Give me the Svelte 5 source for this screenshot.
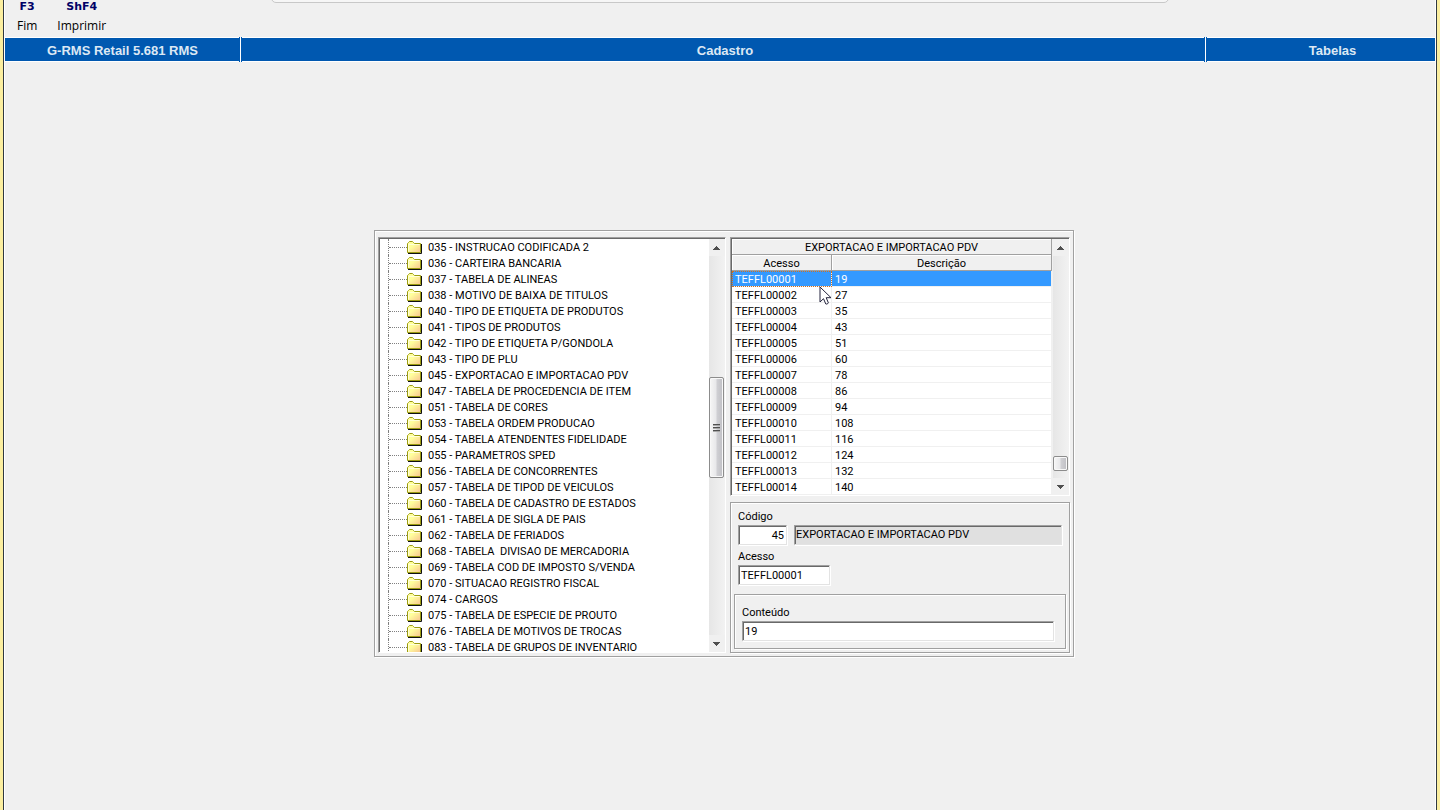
<script>
  const folders = [
    '035 - INSTRUCAO CODIFICADA 2',
    '036 - CARTEIRA BANCARIA',
    '037 - TABELA DE ALINEAS',
    '038 - MOTIVO DE BAIXA DE TITULOS',
    '040 - TIPO DE ETIQUETA DE PRODUTOS',
    '041 - TIPOS DE PRODUTOS',
    '042 - TIPO DE ETIQUETA P/GONDOLA',
    '043 - TIPO DE PLU',
    '045 - EXPORTACAO E IMPORTACAO PDV',
    '047 - TABELA DE PROCEDENCIA DE ITEM',
    '051 - TABELA DE CORES',
    '053 - TABELA ORDEM PRODUCAO',
    '054 - TABELA ATENDENTES FIDELIDADE',
    '055 - PARAMETROS SPED',
    '056 - TABELA DE CONCORRENTES',
    '057 - TABELA DE TIPOD DE VEICULOS',
    '060 - TABELA DE CADASTRO DE ESTADOS',
    '061 - TABELA DE SIGLA DE PAIS',
    '062 - TABELA DE FERIADOS',
    '068 - TABELA  DIVISAO DE MERCADORIA',
    '069 - TABELA COD DE IMPOSTO S/VENDA',
    '070 - SITUACAO REGISTRO FISCAL',
    '074 - CARGOS',
    '075 - TABELA DE ESPECIE DE PROUTO',
    '076 - TABELA DE MOTIVOS DE TROCAS',
    '083 - TABELA DE GRUPOS DE INVENTARIO'
  ];

  const values = ['19', '27', '35', '43', '51', '60', '78', '86', '94', '108', '116', '124', '132', '140'];
  const rows = values.map((value, i) => ({
    key: 'TEFFL' + String(i + 1).padStart(5, '0'),
    value
  }));

  let selected = $state(0);
  let code = $state('45');
  let title = $state('EXPORTACAO E IMPORTACAO PDV');
</script>

{#snippet scrollbar(size, offset, grip)}
  <div class="scrollbar">
    <button type="button" aria-label="Rolar para cima">
      <svg width="7" height="4" viewBox="0 0 7 4" shape-rendering="crispEdges">
        <path d="M3 0h1v1h1v1h1v1h1v1H0V3h1V2h1V1h1z" fill="#505050" />
      </svg>
    </button>
    <div class="track">
      <div class="thumb" style="height: {size}px; top: {offset}%">
        {#if grip}
          <svg width="7" height="8" viewBox="0 0 7 8" shape-rendering="crispEdges">
            <path d="M0 0h7v1H0zM0 3h7v1H0zM0 6h7v1H0z" fill="#505050" />
            <path d="M0 1h7v1H0zM0 4h7v1H0zM0 7h7v1H0z" fill="#a8a8a8" />
          </svg>
        {/if}
      </div>
    </div>
    <button type="button" aria-label="Rolar para baixo">
      <svg width="7" height="4" viewBox="0 0 7 4" shape-rendering="crispEdges">
        <path d="M0 0h7v1H6v1H5v1H4v1H3V3H2V2H1V1H0z" fill="#505050" />
      </svg>
    </button>
  </div>
{/snippet}

<div class="window">
  <div class="tab"></div>

  <div class="toolbar">
    <button type="button"><b>F3</b><span>Fim</span></button>
    <button type="button"><b>ShF4</b><span>Imprimir</span></button>
  </div>

  <header>
    <div class="product">G-RMS Retail 5.681 RMS</div>
    <div class="module">Cadastro</div>
    <div class="screen">Tabelas</div>
  </header>

  <main>
    <div class="panel">
      <div class="tree sunken">
        <ul>
          {#each folders as folder}
            <li>
              <span class="branch"></span>
              <svg width="15" height="13" viewBox="0 0 15 13">
                <path d="M1 12.5h13.5V3" fill="none" stroke="#101010" />
                <path d="M.5 11.500V2.500l1-1 1-1h3l1 1 1 1h6v9z" fill="url(#folder)" stroke="#9c9c10" />
                <path d="M1.500 10.500V3.500h11" fill="none" stroke="#ffffd8" />
              </svg>
              <span class="name">{folder}</span>
            </li>
          {/each}
        </ul>
        {@render scrollbar(101, 32, true)}
      </div>

      <div class="side">
        <div class="grid sunken">
          <table>
            <thead>
              <tr><th colspan="2">{title}</th></tr>
              <tr><th class="key">Acesso</th><th>Descrição</th></tr>
            </thead>
            <tbody>
              {#each rows as row, i}
                <tr class:selected={i === selected} onclick={() => (selected = i)}>
                  <td>{row.key}</td>
                  <td>{row.value}</td>
                </tr>
              {/each}
            </tbody>
          </table>
          {@render scrollbar(15, 90, false)}
          <svg class="pointer" width="13" height="20" viewBox="0 0 13 20">
            <path
              d="M1 1v15l3.500-3.300 2.300 5.300c.2.500 2.800-.6 2.600-1.100L7.200 11.700H12z"
              fill="#fff"
              stroke="#23233c"
            />
          </svg>
        </div>

        <form class="etched">
          <div class="line">
            <div class="field">
              <label for="code">Código</label>
              <input id="code" class="code" bind:value={code} />
            </div>
            <input class="title" aria-label="Nome da tabela" value={title} readonly />
          </div>
          <div class="field">
            <label for="key">Acesso</label>
            <input id="key" class="access" value={rows[selected].key} />
          </div>
          <div class="content etched">
            <label for="content">Conteúdo</label>
            <input id="content" value={rows[selected].value} />
          </div>
        </form>
      </div>
    </div>
  </main>
</div>

<svg class="defs" width="0" height="0" aria-hidden="true">
  <linearGradient id="folder" x1="0" y1="0" x2="1" y2="1">
    <stop offset="0.400" stop-color="#ffff9c" />
    <stop offset="1" stop-color="#f8c490" />
  </linearGradient>
</svg>

<style>
  :global(body) {
    margin: 0;
  }
  .window {
    position: relative;
    box-sizing: border-box;
    min-height: 100vh;
    overflow: hidden;
    border: solid #fbee9f;
    border-width: 0 3px;
    background: #f0f0f0;
    box-shadow: inset 1px 0 #303840, inset -1px 0 #303840, inset 2px 0 #fff, inset -2px 0 #fff;
    padding: 0 2px;
    font-family: Roboto, "Liberation Sans", sans-serif;
    font-size: 11px;
    color: #000;
  }
  .defs {
    position: absolute;
  }
  .tab {
    position: absolute;
    top: -8px;
    left: 268px;
    right: 268px;
    height: 9px;
    border: 1px solid #c8c8c8;
    border-radius: 0 0 5px 5px;
    background: #f6f6f6;
  }
  .toolbar {
    display: flex;
    gap: 20px;
    height: 37px;
    padding-left: 12px;
  }
  button {
    padding: 0;
    border: 0;
    background: none;
    color: inherit;
    font: inherit;
  }
  .toolbar button {
    display: flex;
    flex-direction: column;
    align-items: center;
    font-family: "Open Sans", sans-serif;
    font-size: 12px;
    line-height: 20px;
  }
  .toolbar b {
    margin-top: -3px;
    color: #000066;
    font-family: "DejaVu Sans", sans-serif;
    font-size: 11px;
    line-height: 19px;
  }

  header {
    display: flex;
    border: solid #fff;
    border-width: 1px 0;
    background: #0058b0;
    color: #dce8f4;
    font: bold 13px/21px "Liberation Sans", sans-serif;
    text-align: center;
  }
  header div {
    position: relative;
    padding-top: 2px;
  }
  .product {
    width: 235px;
    border-right: 1px solid #fff;
  }
  .module {
    flex: 1;
    padding-left: 4px;
  }
  .screen {
    width: 205px;
    padding-left: 24px;
    border-left: 1px solid #fff;
  }
  /* small knots where the dividers meet the bar's edges */
  .product::before,
  .product::after,
  .screen::before,
  .screen::after {
    content: "";
    position: absolute;
    z-index: 1;
    width: 1px;
    height: 1px;
    background: #fff;
    box-shadow: -1px 0 #0058b0, 1px 0 #0058b0;
  }
  .product::before,
  .product::after {
    right: -1px;
  }
  .screen::before,
  .screen::after {
    left: -1px;
  }
  .product::before,
  .screen::before {
    top: -1px;
  }
  .product::after,
  .screen::after {
    bottom: -1px;
  }

  main {
    display: flex;
    justify-content: center;
    padding: 168px 0 24px 8px;
  }
  .panel {
    display: flex;
    gap: 4px;
    box-sizing: border-box;
    width: 100%;
    max-width: 700px;
    padding: 6px 3px 3px 3px;
    border: 1px solid #a0a0a0;
    box-shadow: inset 1px 1px #fff, 1px 1px #fff;
  }
  .sunken {
    display: flex;
    border: solid;
    border-width: 1px;
    border-color: #a0a0a0 #fff #fff #a0a0a0;
    box-shadow: inset 1px 1px #696969;
    padding: 1px 0 0 1px;
  }
  .etched {
    border: 1px solid #a0a0a0;
    box-shadow: inset 1px 1px #fff, 1px 1px #fff;
  }

  .tree {
    flex: 1;
    contain: size;
    overflow: hidden;
    background-color: #fff;
  }
  ul {
    flex: 1;
    margin: 0;
    padding: 0 0 0 8px;
    overflow: hidden;
    list-style: none;
  }
  li {
    display: flex;
    align-items: center;
    height: 16px;
    line-height: 14px;
    white-space: pre;
  }
  li svg {
    margin-right: 6px;
  }
  .name {
    padding-top: 2px;
  }
  .branch {
    display: flex;
    align-items: center;
    width: 18px;
    height: 16px;
    border-left: 1px dotted #808080;
  }
  .branch::before {
    content: "";
    flex: 1;
    border-top: 1px dotted #808080;
  }

  .scrollbar {
    display: flex;
    flex-direction: column;
    width: 16px;
    background: linear-gradient(90deg, #e6e6e6, #f2f2f2);
  }
  .scrollbar button {
    display: flex;
    align-items: center;
    justify-content: center;
    height: 17px;
    padding-right: 1px;
    background: #f0f0f0;
  }
  .track {
    position: relative;
    flex: 1;
  }
  .thumb {
    position: absolute;
    left: 0;
    right: 1px;
    display: flex;
    align-items: center;
    justify-content: center;
    box-sizing: border-box;
    border: 1px solid #8c8c8c;
    border-radius: 2px;
    background: linear-gradient(90deg, #f6f6f6 0%, #e8e8ea 45%, #cfcfd3 55%, #bfbfc4 100%);
    box-shadow: inset 0 0 0 1px #f8f8f8;
  }

  .side {
    display: flex;
    flex-direction: column;
    gap: 6px;
    width: 340px;
  }
  .grid {
    position: relative;
    gap: 1px;
  }
  table {
    flex: 1;
    border-collapse: separate;
    border-spacing: 0;
    table-layout: fixed;
    background: #fff;
    line-height: 13px;
  }
  th,
  td {
    height: 13px;
    padding: 2px 3px 0;
    border-right: 1px solid #f0f0f0;
    border-bottom: 1px solid #f0f0f0;
    font-weight: normal;
  }
  th {
    border-color: #a0a0a0;
    background: #f0f0f0;
    box-shadow: inset 1px 1px #fff;
  }
  .key {
    width: 93px;
  }
  tr.selected td {
    background: #3399ff;
    color: #fff;
  }
  tr.selected td:first-child {
    position: relative;
    outline: 1px dotted #d07020;
    outline-offset: -1px;
  }
  .pointer {
    position: absolute;
    left: 88px;
    top: 48px;
  }

  form {
    display: flex;
    flex-direction: column;
    padding: 7px 3px 3px;
  }
  .line {
    display: flex;
    align-items: flex-end;
    gap: 7px;
    padding-right: 4px;
  }
  .field {
    padding-left: 4px;
  }
  label {
    display: block;
    line-height: 14px;
    padding-bottom: 1px;
  }
  .line + .field {
    padding-top: 5px;
  }
  input {
    display: block;
    box-sizing: border-box;
    width: 100%;
    height: 20px;
    margin: 0;
    padding: 0 2px;
    border: solid;
    border-width: 1px;
    border-color: #a0a0a0 #e3e3e3 #e3e3e3 #a0a0a0;
    border-radius: 0;
    outline: 0;
    background: #fff;
    box-shadow: inset 1px 1px #696969, 1px 1px #fff;
    color: #000;
    font: inherit;
  }
  .code {
    width: 49px;
    text-align: right;
  }
  .title {
    flex: 1;
    padding: 0 1px 2px;
    background: #e0e0e0;
  }
  .access {
    width: 92px;
  }
  .content {
    margin-top: 9px;
    padding: 11px 11px 7px 7px;
  }
</style>
